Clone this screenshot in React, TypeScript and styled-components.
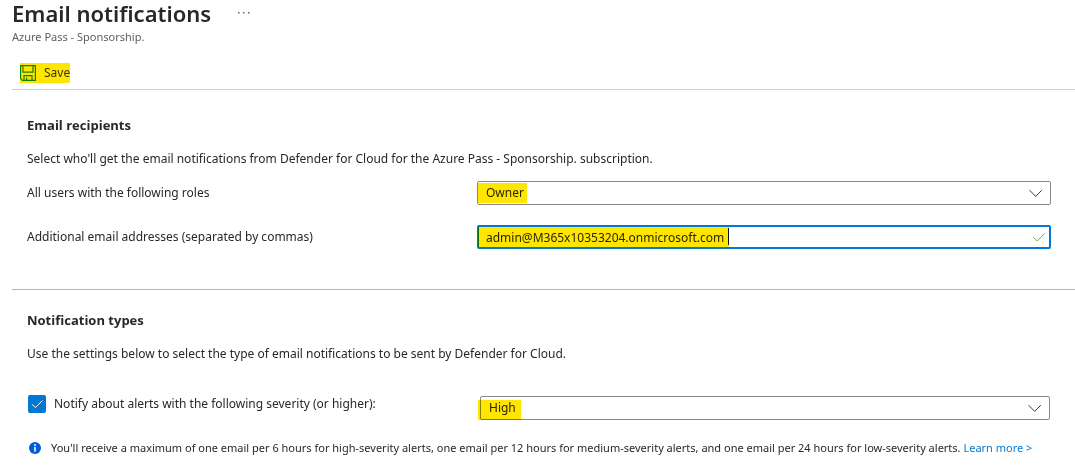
import React from "react";
import styled, { createGlobalStyle } from "styled-components";

const GlobalStyle = createGlobalStyle`
  *, *::before, *::after { box-sizing: border-box; }
  body {
    margin: 0;
    background: #fff;
    color: #292827;
    font-family: "Noto Sans", "Open Sans", sans-serif;
    font-size: 12px;
    line-height: 20px;
  }
  h1, h2, p { margin: 0; }
`;

const Page = styled.main`
  padding-left: 12px;
`;

const TitleRow = styled.header`
  display: flex;
  align-items: center;
  gap: 22px;
  height: 26px;
`;

const Title = styled.h1`
  font-size: 22px;
  line-height: 26px;
  font-weight: 600;
`;

const MoreButton = styled.button`
  display: flex;
  padding: 4px;
  border: 0;
  background: none;
  color: #605e5c;
`;

const Subtitle = styled.p`
  font-size: 11px;
  line-height: 21px;
  color: #605e5c;
`;

const Toolbar = styled.div`
  display: flex;
  padding: 16px 8px 6px;
  border-bottom: 1px solid #d2d0ce;
`;

const SaveButton = styled.button`
  display: flex;
  align-items: center;
  gap: 8px;
  height: 20px;
  padding: 0;
  border: 0;
  background: #ffe600;
  color: #3a3500;
  font: inherit;
`;

const Section = styled.section<{ $divided?: boolean }>`
  padding: ${(p) => (p.$divided ? "25px 24px 40px 15px" : "20px 24px 16px 15px")};
  border-bottom: ${(p) => (p.$divided ? "1px solid #b8b6b4" : "0")};
`;

const Heading = styled.h2`
  font-family: "Open Sans", sans-serif;
  font-size: 13px;
  line-height: 20px;
  font-weight: 700;
`;

const Description = styled.p`
  margin-top: 14px;
`;

const Fields = styled.div`
  display: grid;
  gap: 20px;
  margin-top: 12px;
`;

const FieldRow = styled.div`
  display: grid;
  grid-template-columns: 450px minmax(0, 1fr);
  align-items: center;
`;

const SeverityRow = styled(FieldRow)`
  grid-template-columns: 453px minmax(0, 1fr);
  align-items: end;
  margin: 30px 1px 0 0;
`;

const Control = styled.div`
  position: relative;
  display: flex;
`;

const fieldBase = `
  width: 100%;
  height: 24px;
  border-radius: 2px;
  background: #fff;
  color: #292827;
  font: inherit;
  outline: none;
  appearance: none;
`;

const Select = styled.select`
  ${fieldBase}
  padding: 0 32px 0 8px;
  border: 1px solid #8a8886;
`;

const TextInput = styled.input`
  ${fieldBase}
  padding: 0 32px 0 7px;
  border: 2px solid #0078d4;
`;

const Marker = styled.span<{ $width: number; $left?: number; $top?: number }>`
  position: absolute;
  left: ${(p) => p.$left ?? 1}px;
  top: ${(p) => p.$top ?? 2}px;
  width: ${(p) => p.$width}px;
  height: 20px;
  background: #ffe600;
  mix-blend-mode: multiply;
  pointer-events: none;
`;

const Caret = styled.span`
  position: absolute;
  left: 251px;
  top: 3px;
  width: 1px;
  height: 17px;
  background: #111;
`;

const FieldIcon = styled.svg<{ $right: number }>`
  position: absolute;
  right: ${(p) => p.$right}px;
  top: 5px;
  pointer-events: none;
`;

const CheckLabel = styled.label`
  display: flex;
  align-items: center;
  align-self: start;
  gap: 8px;
  padding: 0 0 6px 1px;
`;

const CheckBox = styled.span`
  position: relative;
  display: flex;

  input {
    width: 18px;
    height: 18px;
    margin: 0;
    appearance: none;
    border-radius: 2px;
    background: #0078d4;
  }

  svg {
    position: absolute;
    inset: 0;
    pointer-events: none;
    visibility: hidden;
  }

  input:checked + svg {
    visibility: visible;
  }
`;

const Info = styled.div`
  display: flex;
  align-items: center;
  gap: 10px;
  margin: 18px -24px 0 2px;
  font-size: 11px;

  svg {
    flex: none;
  }
`;

const Link = styled.a`
  color: #0078d4;
  text-decoration: none;
`;

const Chevron = () => (
  <FieldIcon $right={8} width="14" height="14" viewBox="0 0 14 14" fill="none" stroke="#3b3a39" aria-hidden="true">
    <path d="M.6 4.2 6.7 10.4l6.1-6.2" />
  </FieldIcon>
);

export default function App() {
  return (
    <Page>
      <GlobalStyle />
      <TitleRow>
        <Title>Email notifications</Title>
        <MoreButton aria-label="More options">
          <svg width="14" height="4" viewBox="0 0 14 4" fill="currentColor">
            <rect x="1" y="1" width="1.5" height="1.5" />
            <rect x="6" y="1" width="1.5" height="1.5" />
            <rect x="11" y="1" width="1.5" height="1.5" />
          </svg>
        </MoreButton>
      </TitleRow>
      <Subtitle>Azure Pass - Sponsorship.</Subtitle>
      <Toolbar>
        <SaveButton>
          <svg width="16" height="16" viewBox="0 0 16 16" fill="none" stroke="#14800a" strokeWidth="1.2" aria-hidden="true">
            <path d="M.6.6h14.8v14.8H2.4L.6 13.6z" />
            <path d="M3 .6v6.6h10V.6M4 15.2v-4.6h8v4.6M6.6 15v-2.6" />
          </svg>
          Save
        </SaveButton>
      </Toolbar>

      <Section $divided>
        <Heading>Email recipients</Heading>
        <Description>
          Select who'll get the email notifications from Defender for Cloud for the Azure Pass - Sponsorship. subscription.
        </Description>
        <Fields>
          <FieldRow>
            <label htmlFor="roles">All users with the following roles</label>
            <Control>
              <Select id="roles" defaultValue="Owner">
                <option>Owner</option>
              </Select>
              <Marker $width={49} />
              <Chevron />
            </Control>
          </FieldRow>
          <FieldRow>
            <label htmlFor="emails">Additional email addresses (separated by commas)</label>
            <Control>
              <TextInput id="emails" type="text" defaultValue="admin@M365x10353204.onmicrosoft.com" />
              <Marker $width={251} />
              <Caret />
              <FieldIcon $right={5} width="14" height="14" viewBox="0 0 14 14" fill="none" stroke="#6bb12c" aria-hidden="true">
                <path d="m1.4 7.2 3.8 3.8 7.6-7.6" />
              </FieldIcon>
            </Control>
          </FieldRow>
        </Fields>
      </Section>

      <Section>
        <Heading>Notification types</Heading>
        <Description>
          Use the settings below to select the type of email notifications to be sent by Defender for Cloud.
        </Description>
        <SeverityRow>
          <CheckLabel>
            <CheckBox>
              <input type="checkbox" defaultChecked />
              <svg width="18" height="18" viewBox="0 0 18 18" fill="none" stroke="#fff" aria-hidden="true">
                <path d="m4 9.2 3.4 3.4 7-7" />
              </svg>
            </CheckBox>
            Notify about alerts with the following severity (or higher):
          </CheckLabel>
          <Control>
            <Select aria-label="Alert severity" defaultValue="High">
              <option>High</option>
            </Select>
            <Marker $left={-2} $top={4} $width={43} />
            <Chevron />
          </Control>
        </SeverityRow>
        <Info>
          <svg width="12" height="12" viewBox="0 0 12 12" aria-hidden="true">
            <circle cx="6" cy="6" r="6" fill="#015cda" />
            <circle cx="6" cy="3" r="1" fill="#fff" />
            <rect x="5.2" y="5" width="1.6" height="4.6" fill="#fff" />
          </svg>
          <p>
            You'll receive a maximum of one email per 6 hours for high-severity alerts, one email per 12 hours for
            medium-severity alerts, and one email per 24 hours for low-severity alerts.{" "}
            <Link href="#learn-more">Learn more &gt;</Link>
          </p>
        </Info>
      </Section>
    </Page>
  );
}
